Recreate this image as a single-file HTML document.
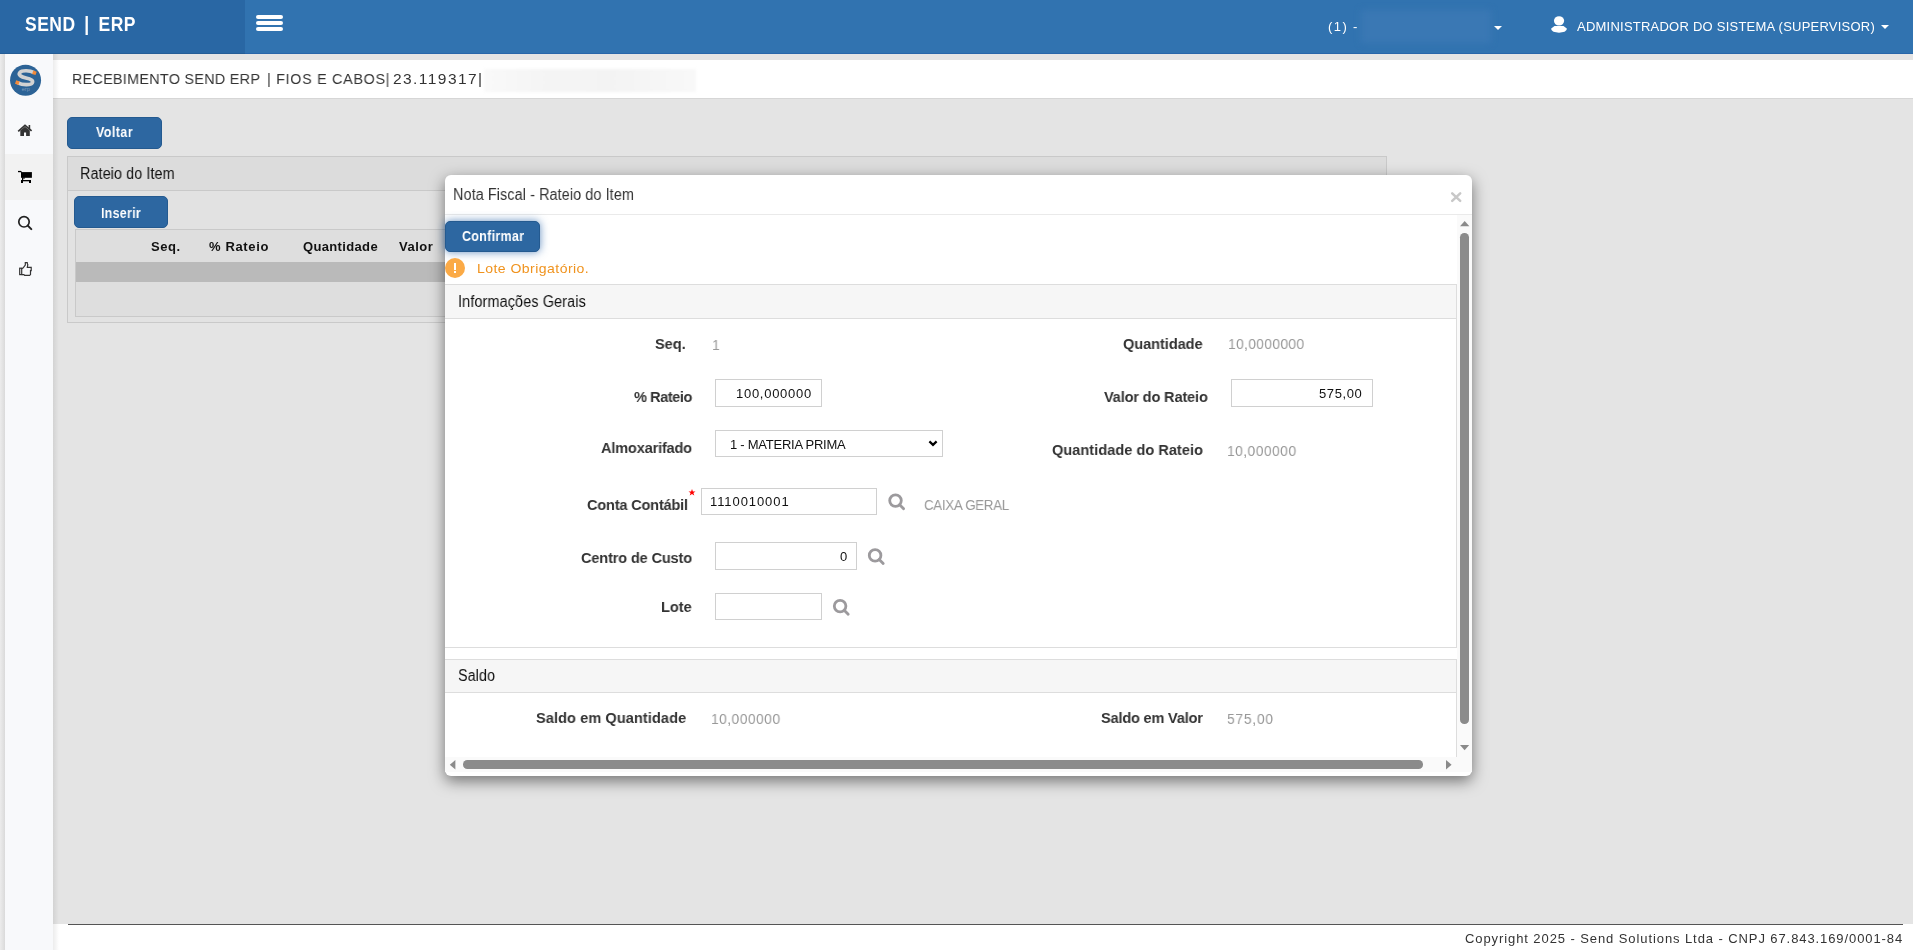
<!DOCTYPE html>
<html>
<head>
<meta charset="utf-8">
<style>
*{box-sizing:border-box;margin:0;padding:0}
html,body{width:1913px;height:950px;overflow:hidden}
body{position:relative;background:#e4e4e4;font-family:"Liberation Sans",sans-serif;color:#333}
.abs{position:absolute;white-space:nowrap}
.t{position:absolute;white-space:nowrap;line-height:1;will-change:transform}
#nav{position:absolute;left:0;top:0;width:1913px;height:54px;background:#3173b0;border-bottom:1px solid #2866aa}
#brand-bg{position:absolute;left:0;top:0;width:245px;height:54px;background:#2967a4;border-bottom:1px solid #245d96}
.hb{position:absolute;left:256px;width:27px;height:4px;background:#fff;border-radius:2px}
#blur{position:absolute;left:1361px;top:10px;width:130px;height:33px;background:#3a78b4;filter:blur(3px)}
.caret{position:absolute;width:0;height:0;border-left:4px solid transparent;border-right:4px solid transparent;border-top:4px solid #fff}
#sidestrip{position:absolute;left:0;top:54px;width:5px;height:896px;background:linear-gradient(to right,#ececec,#dadada)}
#side{position:absolute;left:5px;top:54px;width:48px;height:896px;background:#f8f9fb}
#sideact{position:absolute;left:5px;top:154px;width:48px;height:46px;background:#f2f2f2}
#sideshadow{position:absolute;left:53px;top:54px;width:6px;height:896px;background:linear-gradient(to right,rgba(0,0,0,0.075),rgba(0,0,0,0))}
#hdr{position:absolute;left:53px;top:60px;width:1860px;height:39px;background:#fff;border-bottom:1px solid #d6d6d6}
#hdrblur{position:absolute;left:484px;top:69px;width:212px;height:23px;background:linear-gradient(to right,#f9f9f9,#f4f4f4 30%,#f3f3f3 60%,#f8f8f8);filter:blur(1.5px)}
.btn{position:absolute;background:#2d67a1;border:1px solid #245a90;border-radius:5px}
#panel{position:absolute;left:67px;top:156px;width:1320px;height:167px;border:1px solid #c9c9c9;background:#e2e2e2}
#panelhdr{position:absolute;left:0;top:0;width:100%;height:34px;background:#dcdcdc;border-bottom:1px solid #c9c9c9}
#tbl{position:absolute;left:75px;top:229px;width:1300px;height:88px;border:1px solid #c9c9c9;background:#dedede}
#tblgray{position:absolute;left:0;top:32px;width:100%;height:20px;background:#bababa}
#modal{position:absolute;left:445px;top:175px;width:1027px;height:601px;background:#fff;border-radius:6px;box-shadow:0 5px 15px rgba(0,0,0,0.5)}
.inp{position:absolute;border:1px solid #d0d0d0;background:#fff}
.ph{position:absolute;width:1012px;border-top:1px solid #ddd;border-bottom:1px solid #ddd;border-right:1px solid #ddd;background:#f6f6f6}
#footer{position:absolute;left:53px;top:924px;width:1860px;height:26px;background:#fff}
#footline{position:absolute;left:68px;top:924px;width:1835px;height:1px;background:#555}
</style>
</head>
<body>
<div id="nav"></div>
<div id="brand-bg"></div>
<div class="hb" style="top:15px"></div>
<div class="hb" style="top:21px"></div>
<div class="hb" style="top:27px"></div>
<div id="blur"></div>
<div class="caret" style="left:1494px;top:26px"></div>
<div class="caret" style="left:1881px;top:25px"></div>

<div id="sidestrip"></div>
<div id="side"></div>
<div id="sideact"></div>

<div id="hdr"></div>
<div id="hdrblur"></div>

<div class="btn" style="left:67px;top:117px;width:95px;height:32px"></div>
<div id="panel"><div id="panelhdr"></div></div>
<div class="btn" style="left:74px;top:196px;width:94px;height:32px"></div>
<div id="tbl"><div id="tblgray"></div></div>

<div id="footer"></div>
<div id="footline"></div>
<div id="sideshadow"></div>

<!-- logo -->
<svg class="abs" style="left:8px;top:63px" width="36" height="36" viewBox="0 0 36 36">
<circle cx="17.55" cy="17.25" r="15.5" fill="#2c6396"/>
<path d="M26,9.6 C22,7.4 14,7 11.8,9.6 C10,12 13,13.8 18,15 C23,16.2 25.5,17.6 24.3,19.8 C23,22 15,22.4 10,19.8" fill="none" stroke="#d2d2d2" stroke-width="3.6"/>
<rect x="24.6" y="8" width="3.6" height="3.6" fill="#f28a3a" transform="rotate(20 26.4 9.8)"/>
<rect x="7.5" y="17.8" width="3.6" height="3.6" fill="#f28a3a" transform="rotate(20 9.3 19.6)"/>
<text x="17.8" y="28.3" font-size="5.5" fill="#7f9cbb" text-anchor="middle" font-family="Liberation Sans">erp</text>
</svg>
<!-- home -->
<svg class="abs" style="left:10px;top:115px" width="30" height="30" viewBox="0 0 30 30">
<path d="M8.2,16.3 L15,10.3 L21.6,15.9" fill="none" stroke="#333" stroke-width="1.7"/>
<rect x="18.6" y="10" width="1.6" height="4.5" fill="#333"/>
<path d="M10.3,15.6 L15,11.7 L19.8,15.6 L19.8,20.9 L16.1,20.9 L16.1,17.6 L14,17.6 L14,20.9 L10.3,20.9 Z" fill="#333"/>
</svg>
<!-- cart -->
<svg class="abs" style="left:10px;top:162px" width="30" height="30" viewBox="0 0 30 30">
<rect x="8" y="8.9" width="3" height="1.3" fill="#000"/>
<path d="M10.3,8.9 L11.2,8.9 L12,10.2 L11.2,10.9 Z" fill="#000"/>
<rect x="11" y="10.1" width="10.9" height="5.7" fill="#000"/>
<rect x="12" y="15.5" width="1.2" height="2.7" fill="#000"/>
<rect x="12" y="15.5" width="3" height="1" fill="#000"/>
<rect x="11.2" y="18" width="9.6" height="1.3" fill="#000"/>
<rect x="11" y="18" width="2" height="3" fill="#000"/>
<rect x="19" y="18" width="2" height="3" fill="#000"/>
</svg>
<!-- search -->
<svg class="abs" style="left:10px;top:208px" width="30" height="30" viewBox="0 0 30 30">
<circle cx="14" cy="13.8" r="5.2" fill="none" stroke="#222" stroke-width="1.7"/>
<path d="M17.8,17.6 L21.3,21.1" stroke="#222" stroke-width="2" stroke-linecap="round"/>
</svg>
<!-- thumbs up -->
<svg class="abs" style="left:10px;top:254px" width="30" height="30" viewBox="0 0 30 30">
<rect x="9.7" y="14.2" width="2" height="6.4" fill="none" stroke="#333" stroke-width="1.2"/>
<path d="M11.7,14.6 L13,14 L15.3,11 L15.3,8.6 L17.2,8.6 L17.5,10 L17.8,10.6 L17.3,13.4 L21.2,13.4 L21.2,16.6 L20.5,16.6 L20.5,20.6 L19.6,21.4 L14.6,21.4 L13.9,20.6 L11.7,20.6" fill="none" stroke="#333" stroke-width="1.2"/>
</svg>
<!-- user icon -->
<svg class="abs" style="left:1545px;top:10px" width="30" height="30" viewBox="0 0 30 30">
<ellipse cx="14.05" cy="10.85" rx="5.1" ry="4.7" fill="#fff"/>
<path d="M9.5,15.9 L18.5,15.9 L21.8,18.6 C22,21.5 18,22.7 14,22.7 C10,22.7 6,21.5 6.2,18.6 Z" fill="#fff"/>
</svg>
<div id="brand" class="t" style="left:25.00px;top:13.75px;font-size:17.5px;font-weight:bold;color:#fff;letter-spacing:0.468px;transform:scaleY(1.2);transform-origin:0 0;word-spacing:3.5px;">SEND | ERP</div>
<div id="hdr_a" class="t" style="left:72.00px;top:70.88px;font-size:15.5px;font-weight:normal;color:#333;letter-spacing:0.385px;transform:scaleX(0.92);transform-origin:0 0;">RECEBIMENTO SEND ERP</div>
<div id="hdr_b" class="t" style="left:267.20px;top:70.88px;font-size:15.5px;font-weight:normal;color:#333;letter-spacing:0.812px;transform:scaleX(0.92);transform-origin:0 0;">| FIOS E CABOS|</div>
<div id="hdr_c" class="t" style="left:392.70px;top:70.88px;font-size:15.5px;font-weight:normal;color:#333;letter-spacing:1.442px;transform:scaleX(1.0);transform-origin:0 0;">23.119317|</div>
<div id="filial" class="t" style="left:1328.00px;top:19.67px;font-size:13px;font-weight:normal;color:#fff;letter-spacing:1.500px;">(1)</div>
<div id="filial_b" class="t" style="left:1352.60px;top:19.75px;font-size:13px;font-weight:normal;color:#fff;letter-spacing:0.000px;">-</div>
<div id="user" class="t" style="left:1577.00px;top:20.05px;font-size:13px;font-weight:normal;color:#fff;letter-spacing:0.233px;">ADMINISTRADOR DO SISTEMA (SUPERVISOR)</div>
<div id="voltar" class="t" style="left:96.00px;top:124.50px;font-size:14.5px;font-weight:bold;color:#fff;letter-spacing:0.501px;transform:scaleX(0.86);transform-origin:0 0;">Voltar</div>
<div id="rateio" class="t" style="left:80.00px;top:166.25px;font-size:16px;font-weight:normal;color:#111;letter-spacing:0.077px;transform:scaleX(0.9);transform-origin:0 0;">Rateio do Item</div>
<div id="inserir" class="t" style="left:101.00px;top:205.50px;font-size:14.5px;font-weight:bold;color:#fff;letter-spacing:0.308px;transform:scaleX(0.86);transform-origin:0 0;">Inserir</div>
<div id="th1" class="t" style="left:151.00px;top:239.75px;font-size:13px;font-weight:bold;color:#111;letter-spacing:0.570px;">Seq.</div>
<div id="th2" class="t" style="left:209.00px;top:239.75px;font-size:13px;font-weight:bold;color:#111;letter-spacing:0.636px;">% Rateio</div>
<div id="th3" class="t" style="left:303.00px;top:239.75px;font-size:13px;font-weight:bold;color:#111;letter-spacing:0.348px;">Quantidade</div>
<div id="th4" class="t" style="left:399.00px;top:239.75px;font-size:13px;font-weight:bold;color:#111;letter-spacing:0.500px;">Valor</div>
<div id="copy" class="t" style="left:1465.00px;top:931.75px;font-size:13px;font-weight:normal;color:#333;letter-spacing:0.912px;">Copyright 2025 - Send Solutions Ltda - CNPJ 67.843.169/0001-84</div>

<div id="modal"></div>
<div class="abs" style="left:445px;top:214px;width:1027px;height:1px;background:#eaeaea"></div>
<div class="btn" style="left:445px;top:221px;width:95px;height:31px;box-shadow:0 0 9px rgba(35,95,165,0.7)"></div>
<div class="abs" style="left:445px;top:258px;width:20px;height:20px;border-radius:50%;background:#fbaa46"></div>

<div class="ph" style="left:445px;top:284px;height:35px"></div>
<div class="abs" style="left:445px;top:319px;width:1012px;height:329px;border-bottom:1px solid #ddd;border-right:1px solid #ddd"></div>

<div class="inp" style="left:715px;top:379px;width:107px;height:28px"></div>
<div class="inp" style="left:715px;top:430px;width:228px;height:27px"></div>
<div class="inp" style="left:701px;top:488px;width:176px;height:27px"></div>
<div class="inp" style="left:715px;top:542px;width:142px;height:28px"></div>
<div class="inp" style="left:715px;top:593px;width:107px;height:27px"></div>
<div class="inp" style="left:1231px;top:379px;width:142px;height:28px"></div>

<div class="ph" style="left:445px;top:659px;height:34px"></div>
<div class="abs" style="left:1456px;top:693px;width:1px;height:64px;background:#ddd"></div>

<div class="abs" style="left:1457px;top:215px;width:15px;height:557px;background:#fafafa"></div>
<div class="abs" style="left:445px;top:757px;width:1012px;height:15px;background:#fafafa"></div>
<div class="abs" style="left:1460.3px;top:232.8px;width:8.6px;height:491.6px;border-radius:4.3px;background:#8b8b8b"></div>
<div class="abs" style="left:463px;top:760.3px;width:960px;height:8.6px;border-radius:4.3px;background:#8b8b8b"></div>

<!-- close -->
<svg class="abs" style="left:1440px;top:183px" width="30" height="28" viewBox="0 0 30 28">
<path d="M12.2,10.4 L20.2,17.9 M20.2,10.4 L12.2,17.9" stroke="#c8c8c8" stroke-width="2.5" stroke-linecap="round"/>
</svg>
<!-- warning ! -->
<div class="abs" style="left:454.2px;top:263.2px;width:2.2px;height:6.7px;background:#fff"></div>
<div class="abs" style="left:454.2px;top:271.3px;width:2.2px;height:1.9px;background:#fff"></div>
<!-- asterisk -->
<svg class="abs" style="left:680px;top:482px" width="30" height="20" viewBox="0 0 30 20">
<path d="M12,7 L12.9,9.6 L15.5,9.5 L13.4,11.1 L14.3,13.5 L12,12 L9.7,13.5 L10.6,11.1 L8.5,9.5 L11.1,9.6 Z" fill="#f00"/>
</svg>
<!-- chevron -->
<svg class="abs" style="left:915px;top:430px" width="30" height="28" viewBox="0 0 30 28">
<path d="M14.4,11.4 L18,14.9 L21.6,11.4" fill="none" stroke="#000" stroke-width="2.2"/>
</svg>
<!-- search icons -->
<svg class="abs" style="left:882px;top:488px" width="30" height="30" viewBox="0 0 30 30">
<circle cx="13.5" cy="12.6" r="5.8" fill="none" stroke="#9c9a9d" stroke-width="2.8"/>
<path d="M17.6,16.7 L21.6,20.8" stroke="#9c9a9d" stroke-width="2.8" stroke-linecap="round"/>
</svg>
<svg class="abs" style="left:862px;top:542px" width="30" height="30" viewBox="0 0 30 30">
<circle cx="13.1" cy="13.4" r="5.8" fill="none" stroke="#9c9a9d" stroke-width="2.8"/>
<path d="M17.2,17.5 L21.2,21.6" stroke="#9c9a9d" stroke-width="2.8" stroke-linecap="round"/>
</svg>
<svg class="abs" style="left:827px;top:592px" width="30" height="30" viewBox="0 0 30 30">
<circle cx="13.1" cy="14.1" r="5.8" fill="none" stroke="#9c9a9d" stroke-width="2.8"/>
<path d="M17.2,18.2 L21.2,22.3" stroke="#9c9a9d" stroke-width="2.8" stroke-linecap="round"/>
</svg>
<!-- scroll arrows -->
<svg class="abs" style="left:1457px;top:215px" width="15" height="15" viewBox="0 0 15 15"><path d="M3,11.2 L7.7,6 L12.4,11.2 Z" fill="#8a8a8a"/></svg>
<svg class="abs" style="left:1457px;top:742px" width="15" height="15" viewBox="0 0 15 15"><path d="M3,3 L12.2,3 L7.6,8.3 Z" fill="#8a8a8a"/></svg>
<svg class="abs" style="left:445px;top:757px" width="15" height="15" viewBox="0 0 15 15"><path d="M10.4,3 L10.4,12.5 L4.8,7.7 Z" fill="#8a8a8a"/></svg>
<svg class="abs" style="left:1442px;top:757px" width="15" height="15" viewBox="0 0 15 15"><path d="M4,3 L4,12.5 L9.6,7.7 Z" fill="#8a8a8a"/></svg>
<div id="mtitle" class="t" style="left:453.00px;top:186.65px;font-size:16px;font-weight:normal;color:#333;letter-spacing:0.099px;transform:scaleX(0.9);transform-origin:0 0;">Nota Fiscal - Rateio do Item</div>
<div id="confirmar" class="t" style="left:462.00px;top:228.50px;font-size:14.5px;font-weight:bold;color:#fff;letter-spacing:0.354px;transform:scaleX(0.86);transform-origin:0 0;">Confirmar</div>
<div id="lote_ob" class="t" style="left:477.00px;top:262.37px;font-size:13px;font-weight:normal;color:#f0931e;letter-spacing:0.416px;transform:scaleX(1.08);transform-origin:0 0;">Lote Obrigatório.</div>
<div id="infog" class="t" style="left:458.00px;top:293.65px;font-size:16px;font-weight:normal;color:#111;letter-spacing:0.141px;transform:scaleX(0.9);transform-origin:0 0;">Informações Gerais</div>
<div id="l_seq" class="t" style="left:655.00px;top:335.88px;font-size:15.2px;font-weight:bold;color:#333;letter-spacing:-0.063px;transform:scaleX(0.96);transform-origin:0 0;">Seq.</div>
<div id="v_seq" class="t" style="left:712.00px;top:336.50px;font-size:15.5px;font-weight:normal;color:#999;letter-spacing:0.300px;transform:scaleX(0.9);transform-origin:0 0;">1</div>
<div id="l_rat" class="t" style="left:634.00px;top:389.38px;font-size:15.2px;font-weight:bold;color:#333;letter-spacing:-0.491px;transform:scaleX(0.96);transform-origin:0 0;">% Rateio</div>
<div id="i_rat" class="t" style="left:736.00px;top:386.88px;font-size:13px;font-weight:normal;color:#111;letter-spacing:0.719px;">100,000000</div>
<div id="l_alm" class="t" style="left:601.00px;top:440.38px;font-size:15.2px;font-weight:bold;color:#333;letter-spacing:-0.199px;transform:scaleX(0.96);transform-origin:0 0;">Almoxarifado</div>
<div id="i_alm" class="t" style="left:729.50px;top:437.88px;font-size:13px;font-weight:normal;color:#111;letter-spacing:-0.249px;">1 - MATERIA PRIMA</div>
<div id="l_cc" class="t" style="left:587.00px;top:497.38px;font-size:15.2px;font-weight:bold;color:#333;letter-spacing:-0.206px;transform:scaleX(0.96);transform-origin:0 0;">Conta Contábil</div>
<div id="i_cc" class="t" style="left:710.00px;top:494.88px;font-size:13px;font-weight:normal;color:#111;letter-spacing:0.918px;">1110010001</div>
<div id="v_cc" class="t" style="left:924.00px;top:496.50px;font-size:15.5px;font-weight:normal;color:#999;letter-spacing:-0.346px;transform:scaleX(0.86);transform-origin:0 0;">CAIXA GERAL</div>
<div id="l_ccu" class="t" style="left:581.00px;top:550.37px;font-size:15.2px;font-weight:bold;color:#333;letter-spacing:-0.171px;transform:scaleX(0.96);transform-origin:0 0;">Centro de Custo</div>
<div id="i_ccu" class="t" style="left:840.00px;top:549.88px;font-size:13px;font-weight:normal;color:#111;letter-spacing:0.000px;">0</div>
<div id="l_lote" class="t" style="left:661.00px;top:599.37px;font-size:15.2px;font-weight:bold;color:#333;letter-spacing:-0.058px;transform:scaleX(0.96);transform-origin:0 0;">Lote</div>
<div id="l_qtd" class="t" style="left:1123.00px;top:336.38px;font-size:15.2px;font-weight:bold;color:#333;letter-spacing:-0.058px;transform:scaleX(0.96);transform-origin:0 0;">Quantidade</div>
<div id="v_qtd" class="t" style="left:1228.00px;top:336.00px;font-size:15.5px;font-weight:normal;color:#999;letter-spacing:0.301px;transform:scaleX(0.9);transform-origin:0 0;">10,0000000</div>
<div id="l_vr" class="t" style="left:1104.00px;top:389.37px;font-size:15.2px;font-weight:bold;color:#333;letter-spacing:-0.169px;transform:scaleX(0.96);transform-origin:0 0;">Valor do Rateio</div>
<div id="i_vr" class="t" style="left:1319.00px;top:386.88px;font-size:13px;font-weight:normal;color:#111;letter-spacing:0.600px;">575,00</div>
<div id="l_qr" class="t" style="left:1052.00px;top:442.38px;font-size:15.2px;font-weight:bold;color:#333;letter-spacing:0.011px;transform:scaleX(0.96);transform-origin:0 0;">Quantidade do Rateio</div>
<div id="v_qr" class="t" style="left:1227.00px;top:442.50px;font-size:15.5px;font-weight:normal;color:#999;letter-spacing:0.436px;transform:scaleX(0.9);transform-origin:0 0;">10,000000</div>
<div id="saldo" class="t" style="left:458.00px;top:668.25px;font-size:16px;font-weight:normal;color:#111;letter-spacing:0.027px;transform:scaleX(0.9);transform-origin:0 0;">Saldo</div>
<div id="l_sq" class="t" style="left:536.00px;top:710.37px;font-size:15.2px;font-weight:bold;color:#333;letter-spacing:0.063px;transform:scaleX(0.96);transform-origin:0 0;">Saldo em Quantidade</div>
<div id="v_sq" class="t" style="left:711.00px;top:710.50px;font-size:15.5px;font-weight:normal;color:#999;letter-spacing:0.438px;transform:scaleX(0.9);transform-origin:0 0;">10,000000</div>
<div id="l_sv" class="t" style="left:1101.00px;top:710.38px;font-size:15.2px;font-weight:bold;color:#333;letter-spacing:-0.208px;transform:scaleX(0.96);transform-origin:0 0;">Saldo em Valor</div>
<div id="v_sv" class="t" style="left:1227.00px;top:710.50px;font-size:15.5px;font-weight:normal;color:#999;letter-spacing:0.746px;transform:scaleX(0.9);transform-origin:0 0;">575,00</div>
</body>
</html>
